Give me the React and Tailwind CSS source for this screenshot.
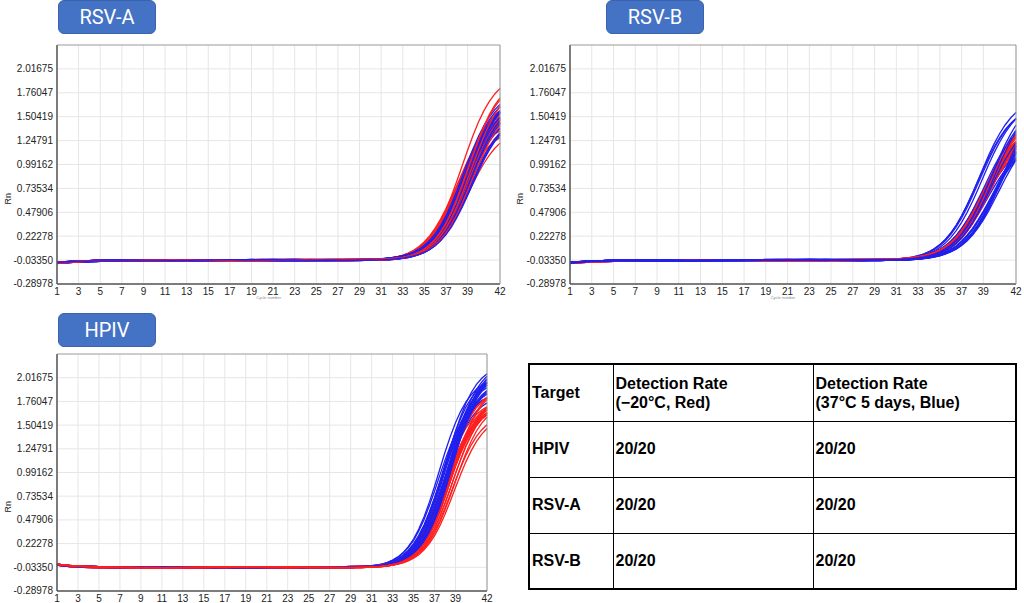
import React from "react";

const YL = ["2.01675", "1.76047", "1.50419", "1.24791", "0.99162", "0.73534", "0.47906", "0.22278", "-0.03350", "-0.28978"];
const XL = [1, 3, 5, 7, 9, 11, 13, 15, 17, 19, 21, 23, 25, 27, 29, 31, 33, 35, 37, 39, 42];

// pseudo random for stable curves
function rnd(seed) {
  const x = Math.sin(seed * 127.1) * 43758.5453;
  return x - Math.floor(x);
}

function makeCurves(cfg) {
  const out = [];
  ["red", "blue"].forEach((col, ci) => {
    const c = cfg[col];
    for (let i = 0; i < 20; i++) {
      const r1 = rnd(i + ci * 50 + cfg.seed);
      const r2 = rnd(i * 3 + ci * 17 + cfg.seed + 9);
      out.push({
        color: col === "red" ? "#ff1f1f" : "#2020ee",
        c0: c.c0 + (r1 - 0.5) * c.spread,
        A: c.A + (r2 - 0.5) * c.aSpread,
        k: c.k,
      });
    }
  });
  // interleave so blue and red overlap
  return out.sort((a, b) => a.c0 - b.c0);
}

function Chart({ w, h, left, right, top, bottom, curves, startDip }) {
  const vMin = -0.28978, step = 0.25628;
  const vTop = 2.01675 + step * ((69 - 45) / 24);
  const y = (v) => bottom - ((v - vMin) / (vTop - vMin)) * (bottom - top);
  const x = (c) => left + ((c - 1) / 41) * (right - left);
  return (
    <svg width={w} height={h} className="overflow-visible block" style={{ fontFamily: "'Liberation Sans', Arial, sans-serif" }}>
      {YL.map((l, i) => {
        const v = 2.01675 - i * step;
        return (
          <g key={l}>
            <line x1={left} x2={right} y1={y(v)} y2={y(v)} stroke="#e6e6e6" />
            <text x={left - 4} y={y(v) + 3.5} fontSize="10" textAnchor="end" fill="#222">{l}</text>
          </g>
        );
      })}
      {XL.map((c) => (
        <g key={c}>
          <line x1={x(c)} x2={x(c)} y1={top} y2={bottom} stroke="#e6e6e6" />
          <text x={x(c)} y={bottom + 11} fontSize="10" textAnchor="middle" fill="#222">{c}</text>
        </g>
      ))}
      <text x={left + 0.45 * (right - left)} y={bottom + 15} fontSize="4" fill="#888">Cycle number</text>
      <text transform={`translate(11 ${(top + bottom) / 2 + 40}) rotate(-90)`} fontSize="9" fill="#222">Rn</text>
      {curves.map((cv, i) => {
        const pts = [];
        for (let c = 1; c <= 42; c += 0.5) {
          const base = -0.0335 + (startDip ? 0.03 * Math.exp(-(c - 1) / 1.5) : -0.03 * Math.exp(-(c - 1) / 3)) + 0.006 * Math.sin(c / 3 + i * 0.2);
          const v = base + cv.A / (1 + Math.exp(-(c - cv.c0) / cv.k)) - cv.A / (1 + Math.exp((cv.c0 - 1) / cv.k));
          pts.push(`${x(c).toFixed(1)},${y(v).toFixed(1)}`);
        }
        return <polyline key={i} points={pts.join(" ")} fill="none" stroke={cv.color} strokeWidth="1.3" />;
      })}
      <line x1={left} x2={left} y1={top} y2={bottom} stroke="#555" strokeWidth="1.5" />
      <line x1={left} x2={right} y1={bottom} y2={bottom} stroke="#555" strokeWidth="1.5" />
      <line x1={left} x2={right} y1={top} y2={top} stroke="#999" />
      <line x1={right} x2={right} y1={top} y2={bottom} stroke="#999" />
    </svg>
  );
}

const rsvA = makeCurves({ seed: 1, red: { c0: 38.6, spread: 1.8, A: 1.75, aSpread: 0.7, k: 1.5 }, blue: { c0: 38.9, spread: 1.0, A: 1.7, aSpread: 0.3, k: 1.5 } });
const rsvB = makeCurves({ seed: 4, red: { c0: 39.3, spread: 0.8, A: 1.5, aSpread: 0.3, k: 1.6 }, blue: { c0: 39.6, spread: 2.4, A: 1.55, aSpread: 0.5, k: 1.6 } });
const hpiv = makeCurves({ seed: 7, red: { c0: 38.4, spread: 1.2, A: 1.85, aSpread: 0.4, k: 1.4 }, blue: { c0: 38.0, spread: 1.4, A: 2.05, aSpread: 0.35, k: 1.4 } });

function Tag({ children, className }) {
  return (
    <div className={`h-[34px] w-[98px] rounded-md bg-[#4472c4] border border-[#3a63ad] text-white text-[20px] flex items-center justify-center ${className}`}>
      {children}
    </div>
  );
}

const rows = [
  ["HPIV", "20/20", "20/20"],
  ["RSV-A", "20/20", "20/20"],
  ["RSV-B", "20/20", "20/20"],
];

export default function App() {
  return (
    <div className="w-[1024px] h-[603px] bg-white overflow-hidden" style={{ fontFamily: "Roboto, 'Liberation Sans', sans-serif" }}>
      <div className="flex h-[300px]">
        <div className="w-[512px]">
          <Tag className="ml-[58px]">RSV-A</Tag>
          <Chart w={512} h={266} left={57} right={500} top={11} bottom={250} curves={rsvA} />
        </div>
        <div className="w-[512px]">
          <Tag className="ml-[94px]">RSV-B</Tag>
          <Chart w={512} h={266} left={58} right={504} top={11} bottom={250} curves={rsvB} />
        </div>
      </div>
      <div className="flex">
        <div className="w-[528px] pt-[13px]">
          <Tag className="ml-[58px]">HPIV</Tag>
          <Chart w={528} h={257} left={57} right={487} top={7} bottom={244} curves={hpiv} startDip />
        </div>
        <div className="pt-[63px]">
          <table className="border-collapse border-2 border-black text-black text-[16px] font-bold" style={{ fontFamily: "'Liberation Sans', Arial, sans-serif" }}>
            <tbody>
              <tr className="h-[57px]">
                <td className="border border-black w-[84px] px-0.5">Target</td>
                <td className="border border-black w-[200px] px-0.5 leading-[19px]">Detection Rate<br />(−20°C, Red)</td>
                <td className="border border-black w-[203px] px-0.5 leading-[19px]">Detection Rate<br />(37°C 5 days, Blue)</td>
              </tr>
              {rows.map((r) => (
                <tr key={r[0]} className="h-[56px]">
                  {r.map((c, i) => (
                    <td key={i} className="border border-black px-0.5">{c}</td>
                  ))}
                </tr>
              ))}
            </tbody>
          </table>
        </div>
      </div>
    </div>
  );
}
